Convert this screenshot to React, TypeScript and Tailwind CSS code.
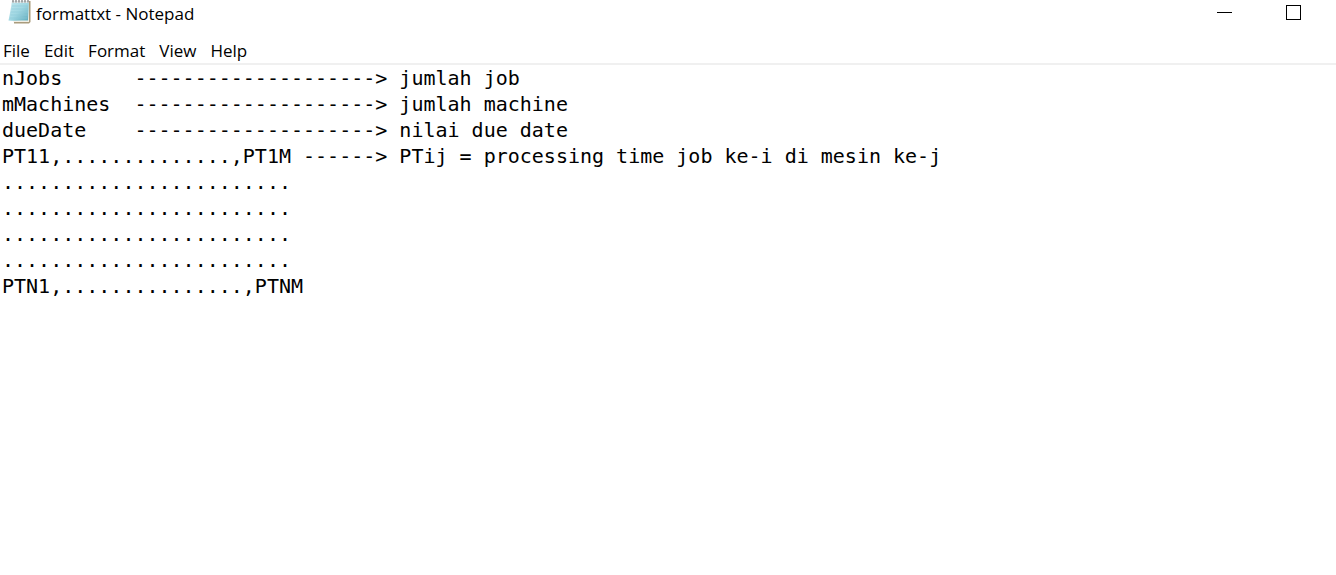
const documentText = [
  'nJobs      --------------------> jumlah job',
  'mMachines  --------------------> jumlah machine',
  'dueDate    --------------------> nilai due date',
  'PT11,..............,PT1M ------> PTij = processing time job ke-i di mesin ke-j',
  '........................',
  '........................',
  '........................',
  '........................',
  'PTN1,...............,PTNM',
].join('\n');

const menus = ['File', 'Edit', 'Format', 'View', 'Help'];

function NotepadIcon() {
  return (
    <svg width="24" height="24" viewBox="0 0 24 24" aria-hidden="true">
      <defs>
        <linearGradient id="page" x1="0" y1="0" x2="1" y2="1">
          <stop offset="0" stopColor="#c4e8ef" />
          <stop offset="0.5" stopColor="#a2d8e3" />
          <stop offset="1" stopColor="#5eabbc" />
        </linearGradient>
      </defs>
      <path d="M5 1H22.5V22L21 23.5H6Z" fill="#a99b7c" />
      <path d="M6 1H21V22H6Z" fill="#f1eee4" />
      <path d="M4 1H21L20 20.5C14 20.5 7 21 0.5 20.5C2 14 3 7 4 1Z" fill="url(#page)" />
      <path d="M4 6H20M3.5 9H20M3 12H20M2.5 15H19.5M2 18H19" stroke="#8ecbd8" strokeWidth="0.6" />
      <path d="M4 2H21" stroke="#e0eaeb" strokeWidth="2" />
      <path d="M5 0V2.5M8 0V2.5M11 0V2.5M14 0V2.5M17 0V2.5M20 0V2.5" stroke="#77777a" strokeWidth="1.2" />
    </svg>
  );
}

export default function App() {
  return (
    <div className="flex min-h-screen flex-col bg-white font-['Open_Sans',sans-serif] text-black">
      <header className="flex h-9 items-start justify-between pl-2">
        <div className="flex items-start gap-1">
          <NotepadIcon />
          <h1 className="pt-0.5 text-[17px] leading-6">formattxt - Notepad</h1>
        </div>
        <div className="flex pr-2">
          <button type="button" aria-label="Minimize" className="flex h-6 w-[69px] items-center justify-center">
            <svg width="15" height="15" viewBox="0 0 15 15" shapeRendering="crispEdges" aria-hidden="true">
              <path d="M0 7.5H15" stroke="#000" />
            </svg>
          </button>
          <button type="button" aria-label="Maximize" className="flex h-6 w-[69px] items-center justify-center">
            <svg width="15" height="15" viewBox="0 0 15 15" shapeRendering="crispEdges" aria-hidden="true">
              <path d="M0.5 0.5H14.5V14.5H0.5Z" fill="none" stroke="#000" />
            </svg>
          </button>
        </div>
      </header>
      <nav aria-label="Menu bar" className="flex h-[29px] items-end gap-3.5 border-b-2 border-[#f0f0f0] pl-[3px]">
        {menus.map((menu) => (
          <button key={menu} type="button" className="text-[17px] leading-6">
            {menu}
          </button>
        ))}
      </nav>
      <textarea
        aria-label="Document text"
        defaultValue={documentText}
        spellCheck={false}
        wrap="off"
        className="w-full grow resize-none overflow-auto bg-white pl-[2px] font-['DejaVu_Sans_Mono',monospace] text-[20px] leading-[26px] text-black outline-none"
      />
    </div>
  );
}
